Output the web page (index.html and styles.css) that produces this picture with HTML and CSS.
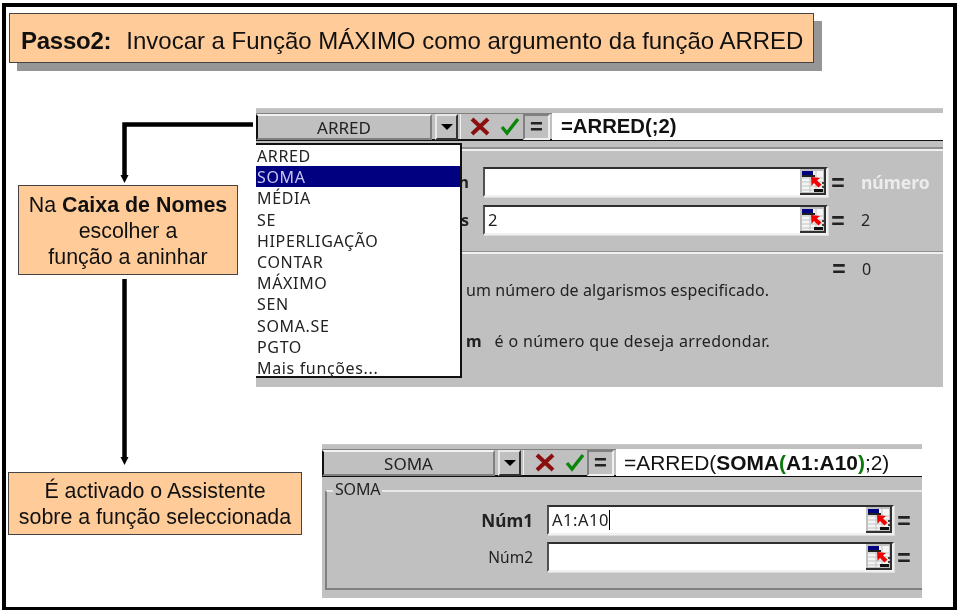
FILE: index.html
```html
<!DOCTYPE html>
<html lang="pt">
<head>
<meta charset="utf-8">
<title>Passo2</title>
<link rel="stylesheet" href="styles.css">
</head>
<body>
<svg width="0" height="0" class="defs" aria-hidden="true">
  <symbol id="refbtn" viewBox="0 0 26 26">
    <rect x="0" y="0" width="26" height="26" fill="#c0c0c0"/>
    <rect x="2" y="2" width="21" height="21" fill="#f4f4f4"/>
    <path d="M2 9h21M2 13h21M2 17h21M2 21h21M10 2v21M16 2v21" stroke="#c4c4c4" stroke-width="1" fill="none"/>
    <rect x="2" y="2" width="11" height="4" fill="#000080"/>
    <rect x="2" y="6" width="13" height="2" fill="#202020"/>
    <path d="M11 8l9 1-3 2.500 4.500 4-3 3-4.500-4.500L11.500 17z" fill="#f00000"/>
    <rect x="14" y="20" width="9" height="3" fill="#101010"/>
    <path d="M23 13v2M23 17v2" stroke="#101010" stroke-width="1.500"/>
    <path d="M0 25h25V0" stroke="#303030" stroke-width="2" fill="none"/>
  </symbol>
</svg>

<main class="frame">
  <h1 class="banner"><b>Passo2:</b><span class="banner-text">Invocar a Função MÁXIMO como argumento da função ARRED</span></h1>

  <svg class="arrows" width="961" height="610" viewBox="0 0 961 610" aria-hidden="true">
    <path d="M253 124.500H124.500V176" fill="none" stroke="#000" stroke-width="4.500"/>
    <path d="M120.500 175h8l-4 8z" fill="#000"/>
    <path d="M124.500 279V458" fill="none" stroke="#000" stroke-width="4.500"/>
    <path d="M120.500 457h8l-4 8z" fill="#000"/>
  </svg>

  <div class="note note-first">
    <p>Na <b>Caixa de Nomes</b></p>
    <p>escolher a</p>
    <p>função a aninhar</p>
  </div>

  <div class="note note-second">
    <p>É activado o Assistente</p>
    <p>sobre a função seleccionada</p>
  </div>

  <section class="excel excel-top">
    <div class="toolbar">
      <div class="namebox">ARRED</div>
      <div class="drop"><span class="tri"></span></div>
      <div class="marks">
        <svg class="mark-x" width="20" height="19" viewBox="0 0 20 19"><path d="M2 2l16 15M18 2L2 17" stroke="#8c0f0f" stroke-width="4" fill="none"/></svg>
        <svg class="mark-v" width="20" height="19" viewBox="0 0 20 19"><path d="M2 10l5 6L18 2" stroke="#0a860a" stroke-width="3.400" fill="none"/></svg>
      </div>
      <div class="eqbtn">=</div>
      <div class="formula formula-bold">=ARRED(;2)</div>
    </div>
    <div class="under"></div>
    <div class="dialog">
      <div class="row">
        <span class="label">n</span>
        <div class="input"><svg class="ref"><use href="#refbtn"/></svg></div>
        <span class="eq">=</span><span class="val val-hint">número</span>
      </div>
      <div class="row row-second">
        <span class="label">s</span>
        <div class="input"><span class="typed">2</span><svg class="ref"><use href="#refbtn"/></svg></div>
        <span class="eq">=</span><span class="val">2</span>
      </div>
      <div class="sep"></div>
      <div class="result"><span class="eq">=</span><span class="val">0</span></div>
      <p class="desc desc-a">um número de algarismos especificado.</p>
      <p class="desc desc-b"><b>m</b><span class="desc-gap">é o número que deseja arredondar.</span></p>
    </div>
    <ul class="menu">
      <li>ARRED</li>
      <li class="sel">SOMA</li>
      <li>MÉDIA</li>
      <li>SE</li>
      <li>HIPERLIGAÇÃO</li>
      <li>CONTAR</li>
      <li>MÁXIMO</li>
      <li>SEN</li>
      <li>SOMA.SE</li>
      <li>PGTO</li>
      <li>Mais funções...</li>
    </ul>
  </section>

  <section class="excel excel-bottom">
    <div class="toolbar">
      <div class="namebox">SOMA</div>
      <div class="drop"><span class="tri"></span></div>
      <div class="marks">
        <svg class="mark-x" width="20" height="19" viewBox="0 0 20 19"><path d="M2 2l16 15M18 2L2 17" stroke="#8c0f0f" stroke-width="4" fill="none"/></svg>
        <svg class="mark-v" width="20" height="19" viewBox="0 0 20 19"><path d="M2 10l5 6L18 2" stroke="#0a860a" stroke-width="3.400" fill="none"/></svg>
      </div>
      <div class="eqbtn">=</div>
      <div class="formula">=ARRED(<b>SOMA<i>(</i>A1:A10<i>)</i></b>;2)</div>
    </div>
    <div class="group">
      <span class="legend">SOMA</span>
      <div class="row">
        <span class="label">Núm1</span>
        <div class="input"><span class="typed">A1:A10<span class="caret"></span></span><svg class="ref"><use href="#refbtn"/></svg></div>
        <span class="eq">=</span>
      </div>
      <div class="row row-second">
        <span class="label label-plain">Núm2</span>
        <div class="input"><svg class="ref"><use href="#refbtn"/></svg></div>
        <span class="eq">=</span>
      </div>
    </div>
  </section>
</main>
</body>
</html>
```
FILE: styles.css
```css
* { box-sizing: border-box; }
html, body { margin: 0; padding: 0; background: #fff; }
body { width: 961px; height: 610px; overflow: hidden; position: relative; font-family: "Liberation Sans", Arial, sans-serif; color: #111; }
.defs { position: absolute; }
p { margin: 0; }

.frame { position: absolute; left: 2px; top: 3px; width: 955px; height: 607px; border: 4px solid #000; border-bottom-width: 3px; }

.banner { position: absolute; left: 3px; top: 6px; width: 805px; height: 50px; margin: 0; padding: 5px 0 0 11px; display: flex; align-items: center; white-space: pre; font-size: 24px; font-weight: 400; background: #ffcc99; border: 1px solid #444; box-shadow: 8px 8px 0 #969696; filter: blur(0.3px); }
.banner b { font-weight: 700; letter-spacing: -0.25px; }
.banner-text { margin-left: 15px; letter-spacing: -0.01px; }

.arrows { position: absolute; left: -6px; top: -7px; pointer-events: none; }

.note { position: absolute; background: #ffcc99; border: 1px solid #444; text-align: center; font-size: 21.400px; display: flex; flex-direction: column; justify-content: center; filter: blur(0.3px); }
.note-first { left: 12px; top: 178px; width: 220px; height: 90px; line-height: 26px; padding-top: 2px; }
.note-second { left: 2px; top: 465px; width: 294px; height: 63px; line-height: 26px; }

.excel { position: absolute; background: #c0c0c0; font-family: "Noto Sans", Tahoma, sans-serif; font-size: 16px; color: #222; filter: blur(0.4px); }
.excel-top { left: 250px; top: 101px; width: 687px; height: 279px; }
.excel-bottom { left: 316px; top: 437px; width: 600px; height: 154px; overflow: hidden; }

.toolbar { display: flex; height: 33px; padding-top: 5px; border-top: 1px solid #c8c8c8; border-bottom: 2px solid #111; position: relative; background: #c0c0c0; box-shadow: inset 0 4px 0 #c0c0c0, inset 0 5px 0 #808080; }
.namebox { width: 176px; height: 26px; line-height: 23px; font-size: 17px; text-align: center; border: 2px solid; border-color: #f2f2f2 #808080 #808080 #111; flex: none; }
.excel-bottom .namebox { width: 173px; }
.drop { width: 23px; height: 26px; margin-left: 3px; display: flex; align-items: center; justify-content: center; border: 2px solid; border-color: #e8e8e8 #333 #333 #e8e8e8; flex: none; }
.tri { width: 0; height: 0; border-left: 6px solid transparent; border-right: 6px solid transparent; border-top: 6px solid #000; }
.marks { width: 63px; display: flex; gap: 10px; align-items: center; padding-left: 9px; flex: none; border-left: 1px solid #f0f0f0; margin-left: 2px; }
.excel-bottom .marks { width: 64px; padding-left: 11px; }
.eqbtn { width: 27px; height: 26px; border: 2px solid; border-color: #808080 #f0f0f0 #f0f0f0 #808080; font: 700 22px/22px "Liberation Sans", sans-serif; text-align: center; flex: none; }
.formula { flex: 1; margin-left: 2px; margin-top: -1px; height: 27px; background: #fff; padding-left: 9px; font: 400 20.900px/27px "Liberation Sans", sans-serif; color: #111; }
.excel-bottom .formula { padding-left: 8px; }
.formula-bold { font-weight: 700; font-size: 20.300px; }
.formula i { font-style: normal; color: #0a7a0a; }

.under { height: 10px; border-bottom: 2px solid #f0f0f0; box-shadow: inset 0 -2px 0 #909090; }

.dialog { padding-top: 16px; }
.row { display: flex; align-items: center; height: 30px; }
.row-second { margin-top: 8px; }
.label { width: 227px; flex: none; text-align: right; padding-right: 14px; font-weight: 700; }
.label-plain { font-weight: 400; }
.input { width: 345px; height: 30px; flex: none; background: #fff; border: 2px solid; border-color: #303030 #f0f0f0 #f0f0f0 #505050; display: flex; align-items: center; justify-content: space-between; padding-right: 0; box-shadow: 1px 1px 0 #dcdcdc; }
.typed { padding-left: 3px; line-height: 26px; font-size: 16.500px; letter-spacing: 0.5px; }
.caret { display: inline-block; width: 1px; height: 20px; background: #000; vertical-align: -4px; }
.ref { width: 26px; height: 26px; margin-left: auto; }
.eq { width: 14px; margin-left: 3px; flex: none; font: 700 23px/1 "Liberation Sans", sans-serif; text-align: center; position: relative; top: 1px; }
.val { margin-left: 16px; font-size: 16px; }
.val-hint { color: #ececec; font-weight: 700; font-size: 17.500px; }
.sep { height: 2px; margin-top: 17px; background: #f0f0f0; box-shadow: 0 -1px 0 #909090; }
.result { padding: 4px 0 0 573px; display: flex; align-items: center; height: 25px; }
.desc { padding-left: 210px; line-height: 22px; }
.desc-a { letter-spacing: 0.08px; }
.desc-b { margin-top: 29px; }
.desc-gap { margin-left: 13px; letter-spacing: 0.35px; }

.menu { position: absolute; left: 0; top: 35px; width: 206px; height: 235px; margin: 0; padding: 0; list-style: none; background: #fff; border: solid #111; border-width: 2px 2px 2px 0; color: #222; }
.menu li { height: 21.200px; line-height: 23px; padding-left: 1px; white-space: nowrap; letter-spacing: 0.65px; }
.menu .sel { background: #000080; color: #c6c6f0; }

.group { position: absolute; left: 3px; top: 46px; width: 620px; height: 100px; border: 2px solid; border-color: #e8e8e8 transparent #808080 #808080; padding-top: 13px; }
.legend { position: absolute; left: 6px; top: -13px; background: #c0c0c0; padding: 0 2px; line-height: 20px; letter-spacing: -0.2px; }
.group .label { width: 220px; padding-right: 14px; font-size: 17.200px; }
.group .label-plain { font-size: 15.500px; }
.group .row { height: 30px; }
.group .row-second { margin-top: 7px; }
.group .input { width: 347px; }
```
